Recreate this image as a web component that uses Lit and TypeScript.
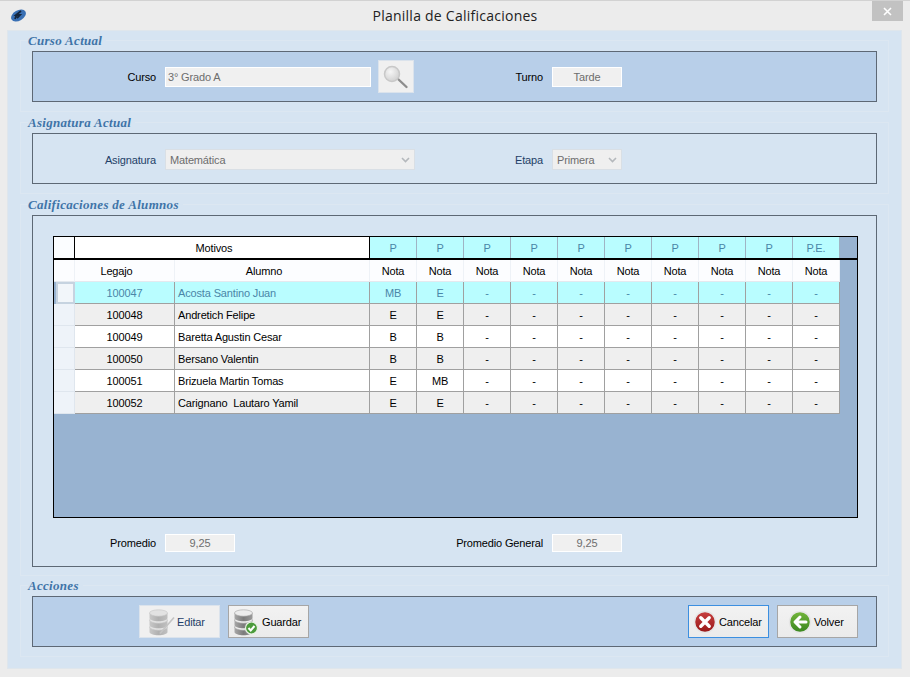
import { LitElement, css, html, svg } from "lit";
import { customElement } from "lit/decorators.js";

type Alumno = {
  legajo: string;
  nombre: string;
  notas: [string, string];
};

const ALUMNOS: Alumno[] = [
  { legajo: "100047", nombre: "Acosta Santino Juan", notas: ["MB", "E"] },
  { legajo: "100048", nombre: "Andretich Felipe", notas: ["E", "E"] },
  { legajo: "100049", nombre: "Baretta Agustin Cesar", notas: ["B", "B"] },
  { legajo: "100050", nombre: "Bersano Valentin", notas: ["B", "B"] },
  { legajo: "100051", nombre: "Brizuela Martin Tomas", notas: ["E", "MB"] },
  { legajo: "100052", nombre: "Carignano  Lautaro Yamil", notas: ["E", "E"] }
];

const MOTIVOS = ["P", "P", "P", "P", "P", "P", "P", "P", "P", "P.E."];

const discs = (id: string, faded: boolean) => [
  svg`
    <defs>
      <linearGradient id=${id} x1="0" y1="0" x2="1" y2="0">
        <stop offset="0" stop-color=${faded ? "#c8c8c8" : "#a8a8a8"} />
        <stop offset="0.5" stop-color=${faded ? "#b0b0b0" : "#7c7c7c"} />
        <stop offset="1" stop-color=${faded ? "#c0c0c0" : "#9a9a9a"} />
      </linearGradient>
    </defs>
  `,
  ...[16, 9, 2].map(
    (y) => svg`
      <path d="M0.500 ${y + 3}v5c0 1.800 4 3.200 9 3.200s9-1.400 9-3.200v-5z" fill="url(#${id})" />
      <ellipse cx="9.500" cy=${y + 3} rx="9" ry="3.200" fill=${faded ? "#e2e2e2" : "#ececec"} stroke=${faded ? "#c6c6c6" : "#a4a4a4"} stroke-width="0.600" />
    `
  )
];

const logoIcon = html`
  <svg width="18" height="15" viewBox="0 0 18 15">
    <ellipse cx="8.500" cy="7.500" rx="8" ry="5.200" transform="rotate(-30 8.500 7.500)" fill="#3a70b4" />
    <path d="M11 3 6 7h4L7 10M6.500 7 5 11" stroke="#16263c" stroke-width="1.800" fill="none" />
  </svg>
`;

const searchIcon = html`
  <svg width="26" height="26" viewBox="0 0 26 26">
    <defs>
      <radialGradient id="lens" cx="0.400" cy="0.350" r="0.700">
        <stop offset="0" stop-color="#f6f6f6" />
        <stop offset="1" stop-color="#cfcfcf" />
      </radialGradient>
    </defs>
    <path d="m14.500 14.500 9 8.500" stroke="#8d8d8d" stroke-width="2.400" stroke-linecap="round" />
    <circle cx="9" cy="10" r="7.500" fill="url(#lens)" stroke="#c8c8c8" stroke-width="1.500" />
  </svg>
`;

const editarIcon = html`
  <svg width="26" height="28" viewBox="0 0 26 28">
    ${discs("discoGris", true)}
    <path d="M11 25.500 25 9.500" stroke="#c4c4c4" stroke-width="1.600" />
  </svg>
`;

const guardarIcon = html`
  <svg width="26" height="28" viewBox="0 0 26 28">
    ${discs("discoOscuro", false)}
    <circle cx="17.500" cy="20" r="6" fill="#4c9b3c" stroke="#e8f2e4" stroke-width="1.200" />
    <path d="m14.500 20 2.200 2.400 3.800-4.400" stroke="#fff" stroke-width="2" fill="none" />
  </svg>
`;

const cancelarIcon = html`
  <svg width="24" height="24" viewBox="0 0 24 24">
    <defs>
      <linearGradient id="rojo" x1="0" y1="0" x2="0" y2="1">
        <stop offset="0" stop-color="#c84040" />
        <stop offset="1" stop-color="#981818" />
      </linearGradient>
    </defs>
    <circle cx="12" cy="12" r="10.500" fill="url(#rojo)" stroke="#e6e6e6" stroke-width="1.500" />
    <path d="m7.800 7.800 8.400 8.400m0-8.400-8.400 8.400" stroke="#fff" stroke-width="3.400" stroke-linecap="round" />
  </svg>
`;

const volverIcon = html`
  <svg width="24" height="24" viewBox="0 0 24 24">
    <defs>
      <linearGradient id="verde" x1="0" y1="0" x2="0" y2="1">
        <stop offset="0" stop-color="#74b63c" />
        <stop offset="1" stop-color="#3a861f" />
      </linearGradient>
    </defs>
    <circle cx="12" cy="12" r="10.500" fill="url(#verde)" stroke="#e6e6e6" stroke-width="1.500" />
    <path d="M18 12H7.500m4.500-5-5 5 5 5" stroke="#fff" stroke-width="3" fill="none" stroke-linecap="round" stroke-linejoin="round" />
  </svg>
`;

const chevron = html`
  <svg width="9" height="6" viewBox="0 0 9 6">
    <path d="m1 1 3.500 3.500L8 1" stroke="#b4b8bc" stroke-width="1.600" fill="none" />
  </svg>
`;

@customElement("app-root")
export class AppRoot extends LitElement {
  static styles = css`
    :host {
      display: block;
      width: 910px;
      height: 677px;
      font-family: "Liberation Sans", Arial, sans-serif;
      font-size: 11px;
      letter-spacing: -0.15px;
      color: #000;
      overflow: hidden;
    }

    .window {
      box-sizing: border-box;
      width: 910px;
      height: 677px;
      background: #ececec;
      border-top: 1px solid #d2d2d2;
      display: flex;
      flex-direction: column;
    }

    .titlebar {
      height: 29px;
      flex: none;
      position: relative;
      display: flex;
      justify-content: center;
      align-items: center;
    }

    .titlebar .logo {
      position: absolute;
      left: 10px;
      top: 7px;
      line-height: 0;
    }

    .titlebar h1 {
      margin: 0;
      font-family: "Open Sans", sans-serif;
      font-weight: 400;
      font-size: 14px;
      letter-spacing: 0.25px;
      color: #222;
    }

    .close {
      position: absolute;
      left: 872px;
      top: 0;
      width: 31px;
      height: 20px;
      background: #c2c2c2;
      display: flex;
      align-items: center;
      justify-content: center;
    }

    .client {
      box-sizing: border-box;
      width: 895px;
      height: 639px;
      margin-left: 7px;
      background: #d6e4f2;
      border: 1px solid #dfe6ec;
      padding: 9px 12px 0;
      display: flex;
      flex-direction: column;
      gap: 10px;
    }

    .group {
      position: relative;
      box-sizing: border-box;
      border: 1px solid #dce7f2;
      padding: 10px 11px 9px;
    }

    .group.notas {
      padding-bottom: 8px;
      margin-bottom: -1px;
    }

    .group .legend {
      position: absolute;
      left: 7px;
      top: -8px;
      padding-right: 4px;
      background: #d6e4f2;
      font-family: "Liberation Serif", serif;
      font-weight: 700;
      font-style: italic;
      font-size: 13px;
      line-height: 15px;
      letter-spacing: 0.3px;
      color: #3f74a8;
    }

    .panel {
      box-sizing: border-box;
      border: 1px solid #5d6875;
      height: 51px;
    }

    .panel.filled {
      background: #b8cfe9;
    }

    .panel.drop {
      padding-top: 2px;
    }

    .panel.tall {
      height: 352px;
      padding: 20px 18px 0 20px;
    }

    .fields {
      height: 100%;
      display: grid;
      grid-template-columns: 132px 250px 137px 70px;
      align-items: center;
    }

    .averages {
      height: auto;
      margin: 16px 0 0 -20px;
    }

    .label {
      text-align: right;
      padding-right: 9px;
    }

    .label.blue {
      color: #1f3f68;
    }

    .picker {
      display: flex;
      align-items: center;
    }

    .input {
      box-sizing: border-box;
      height: 20px;
      width: 100%;
      background: #f0f0f0;
      border: 1px solid #fff;
      color: #6d6d6d;
      display: flex;
      align-items: center;
      padding: 0 2px;
    }

    .picker .input {
      width: 206px;
    }

    .input.center {
      justify-content: center;
    }

    .averages .input {
      height: 18px;
    }

    .averages .input.avg {
      width: 70px;
    }

    .select {
      box-sizing: border-box;
      height: 21px;
      background: #efefef;
      border: 1px solid #d9dfe5;
      color: #6d6d6d;
      display: flex;
      align-items: center;
      justify-content: space-between;
      padding: 0 4px;
    }

    .search {
      box-sizing: border-box;
      width: 36px;
      height: 33px;
      margin-left: 7px;
      background: #f0f0f0;
      border: 1px solid #dbe3ec;
      display: flex;
      align-items: center;
      justify-content: center;
      flex: none;
    }

    .grid {
      box-sizing: border-box;
      height: 282px;
      border: 1px solid #000;
      background: #98b3d1;
    }

    .band {
      box-sizing: border-box;
      display: grid;
      grid-template-columns: 21px 295px repeat(10, 47px);
      height: 23px;
      border-bottom: 2px solid #000;
    }

    .band .corner {
      background: #fbfdff;
      border-right: 1px solid #000;
    }

    .band .motivos {
      background: #fff;
      border-right: 1px solid #000;
      display: flex;
      align-items: center;
      justify-content: center;
      padding-right: 16px;
    }

    .band .motivo {
      background: #b9fdff;
      border-right: 1px solid #9fb4c4;
      color: #4a86a8;
      display: flex;
      align-items: center;
      justify-content: center;
    }

    .row {
      display: grid;
      grid-template-columns: 21px 100px 195px repeat(10, 47px);
      width: 786px;
      height: 22px;
    }

    .row.head {
      background: #fcfdff;
    }

    .cell {
      box-sizing: border-box;
      display: flex;
      align-items: center;
      justify-content: center;
      border-right: 1px solid #a0a0a0;
      border-bottom: 1px solid #a0a0a0;
      white-space: pre;
    }

    .cell.name {
      justify-content: flex-start;
      padding-left: 3px;
    }

    .row.head .cell {
      border-right: 1px solid #eef2f7;
      border-bottom: 1px solid #e4e9ef;
    }

    .row.head .cell.shifted {
      padding-right: 16px;
    }

    .row .gutter {
      background: #eef3f9;
      border-right: 1px solid #dfe6ee;
      border-bottom: 1px solid #dfe6ee;
    }

    .row.selected .gutter {
      background: #f2f6fa;
      border: 2px solid #c6d3e0;
      margin-left: 2px;
    }

    .row.even .cell:not(.gutter) {
      background: #efefef;
    }

    .row.odd .cell:not(.gutter) {
      background: #fff;
    }

    .row.selected .cell:not(.gutter) {
      background: #b9fdff;
      color: #4a86a8;
    }

    .actions {
      display: flex;
      align-items: center;
      padding-left: 106px;
      padding-right: 18px;
    }

    .btn {
      box-sizing: border-box;
      width: 81px;
      height: 33px;
      background: linear-gradient(#f2f2f2, #ebebeb);
      border: 1px solid #a6a6a6;
      display: flex;
      align-items: center;
      gap: 2px;
      flex: none;
      padding-left: 5px;
    }

    .btn.editar {
      background: #f0f0f0;
      border-color: #dbe3ec;
      color: #1f3f68;
      padding-left: 9px;
    }

    .btn.cancelar {
      border-color: #3c8fe0;
      padding-left: 4px;
    }

    .btn.volver {
      padding-left: 10px;
    }

    .btn + .btn {
      margin-left: 8px;
    }

    .spacer {
      flex: 1;
    }
  `;

  private renderRow(alumno: Alumno, index: number) {
    const rowClass = index === 0 ? "selected" : index % 2 === 1 ? "even" : "odd";
    const rest = Array.from({ length: 8 }, () => "-");
    return html`
      <div class="row ${rowClass}">
        <div class="cell gutter"></div>
        <div class="cell">${alumno.legajo}</div>
        <div class="cell name">${alumno.nombre}</div>
        ${[...alumno.notas, ...rest].map((nota) => html`<div class="cell">${nota}</div>`)}
      </div>
    `;
  }

  protected render() {
    return html`
      <div class="window">
        <div class="titlebar">
          <span class="logo">${logoIcon}</span>
          <h1>Planilla de Calificaciones</h1>
          <div class="close">
            <svg width="9" height="9" viewBox="0 0 9 9"><path d="m1 1 7 7m0-7-7 7" stroke="#fff" stroke-width="1.600" /></svg>
          </div>
        </div>
        <div class="client">
          <section class="group">
            <div class="legend">Curso Actual</div>
            <div class="panel filled">
              <div class="fields">
                <span class="label">Curso</span>
                <div class="picker">
                  <div class="input">3° Grado A</div>
                  <div class="search">${searchIcon}</div>
                </div>
                <span class="label">Turno</span>
                <div class="input center">Tarde</div>
              </div>
            </div>
          </section>
          <section class="group">
            <div class="legend">Asignatura Actual</div>
            <div class="panel drop">
              <div class="fields">
                <span class="label blue">Asignatura</span>
                <div class="select">Matemática ${chevron}</div>
                <span class="label blue">Etapa</span>
                <div class="select">Primera ${chevron}</div>
              </div>
            </div>
          </section>
          <section class="group notas">
            <div class="legend">Calificaciones de Alumnos</div>
            <div class="panel tall">
              <div class="grid">
                <div class="band">
                  <div class="corner"></div>
                  <div class="motivos">Motivos</div>
                  ${MOTIVOS.map((motivo) => html`<div class="motivo">${motivo}</div>`)}
                </div>
                <div class="row head">
                  <div class="cell"></div>
                  <div class="cell shifted">Legajo</div>
                  <div class="cell shifted">Alumno</div>
                  ${MOTIVOS.map(() => html`<div class="cell">Nota</div>`)}
                </div>
                ${ALUMNOS.map((alumno, index) => this.renderRow(alumno, index))}
              </div>
              <div class="fields averages">
                <span class="label">Promedio</span>
                <div class="input center avg">9,25</div>
                <span class="label">Promedio General</span>
                <div class="input center">9,25</div>
              </div>
            </div>
          </section>
          <section class="group">
            <div class="legend">Acciones</div>
            <div class="panel filled actions">
              <div class="btn editar">${editarIcon} Editar</div>
              <div class="btn">${guardarIcon} Guardar</div>
              <div class="spacer"></div>
              <div class="btn cancelar">${cancelarIcon} Cancelar</div>
              <div class="btn volver">${volverIcon} Volver</div>
            </div>
          </section>
        </div>
      </div>
    `;
  }
}
